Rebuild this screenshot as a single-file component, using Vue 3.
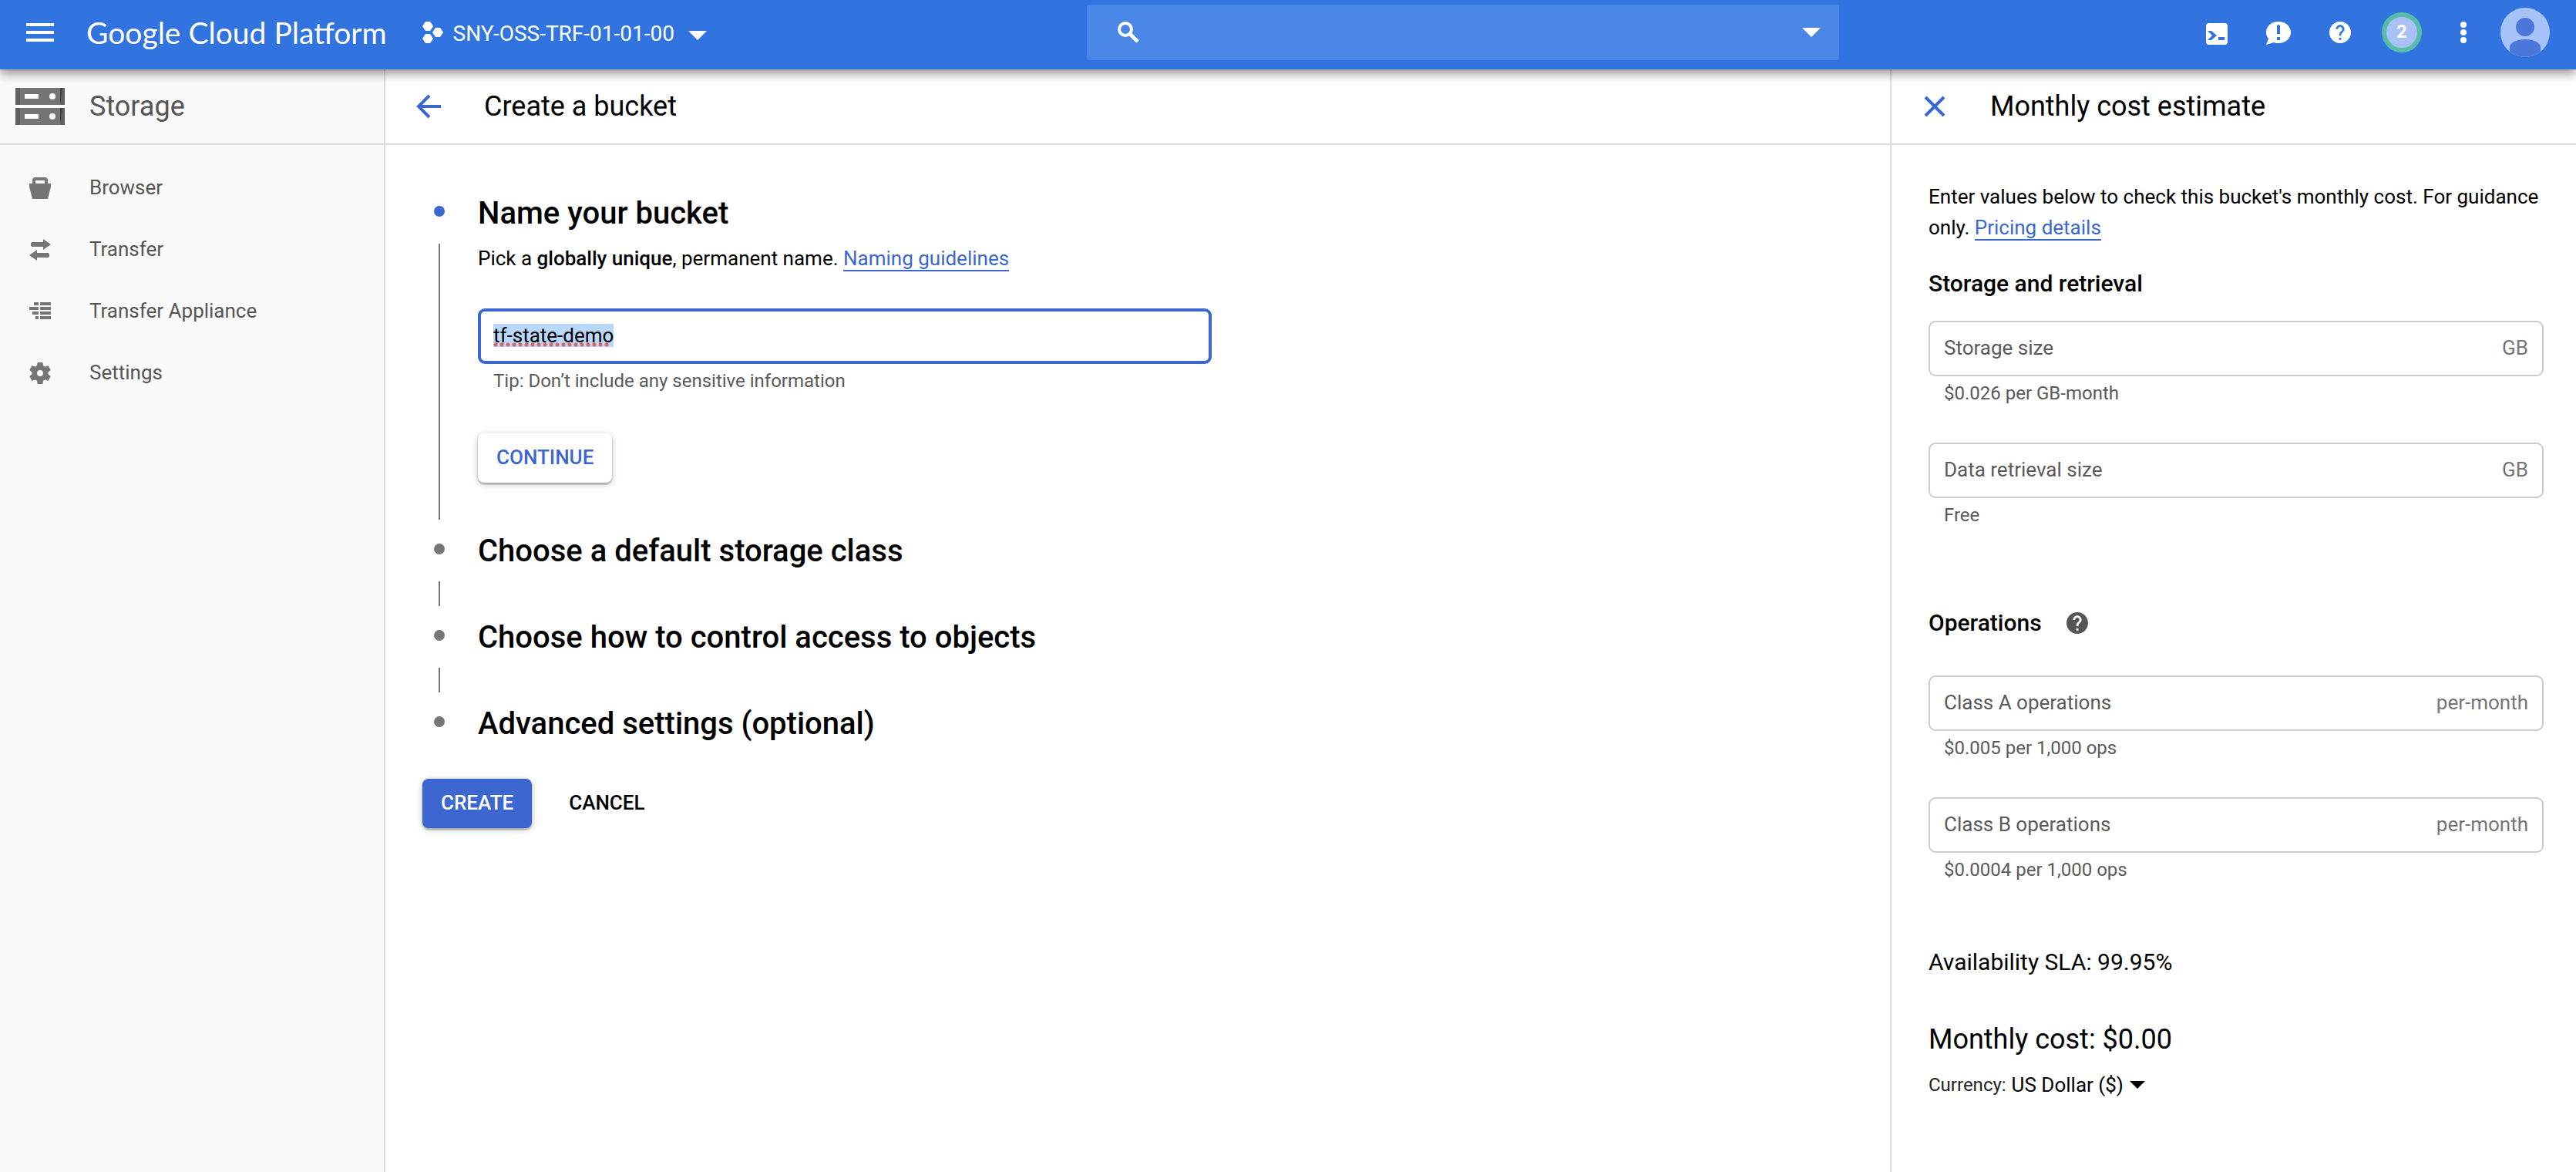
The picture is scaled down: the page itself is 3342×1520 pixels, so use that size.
<script setup>
import { onMounted, ref } from 'vue'

const bucketName = ref('tf-state-demo')
const nameInput = ref(null)
const currency = ref('USD')

const steps = [
  'Choose a default storage class',
  'Choose how to control access to objects',
  'Advanced settings (optional)'
]

const storageFields = ref([
  { id: 'storage-size', label: 'Storage size', unit: 'GB', hint: '$0.026 per GB-month', value: '' },
  { id: 'retrieval-size', label: 'Data retrieval size', unit: 'GB', hint: 'Free', value: '' }
])

const operationFields = ref([
  { id: 'class-a', label: 'Class A operations', unit: 'per-month', hint: '$0.005 per 1,000 ops', value: '' },
  { id: 'class-b', label: 'Class B operations', unit: 'per-month', hint: '$0.0004 per 1,000 ops', value: '' }
])

onMounted(() => {
  nameInput.value.focus()
  nameInput.value.select()
})
</script>

<template>
  <div class="app">
    <header class="topbar">
      <div class="topbar-left">
        <button class="icon-btn menu" aria-label="Navigation menu">
          <svg width="36" height="24" viewBox="0 0 36 24"><path fill="currentColor" d="M0 0h36v4H0zM0 10h36v4H0zM0 20h36v4H0z" /></svg>
        </button>
        <a class="brand" href="#">Google Cloud Platform</a>
        <button class="project">
          <svg width="28" height="28" viewBox="0 0 28 28">
            <path fill="currentColor" d="M4 0h6l4 6-4 6H4L0 6zM4 16h6l4 6-4 6H4l-4-6zM17 8h6l4 6-4 6h-6l-4-6z" />
          </svg>
          <span>SNY-OSS-TRF-01-01-00</span>
          <svg class="caret" width="24" height="12" viewBox="0 0 24 12"><path fill="currentColor" d="M0 0h24L12 12z" /></svg>
        </button>
      </div>

      <div class="search">
        <svg width="28" height="28" viewBox="0 0 28 28" fill="none" stroke="currentColor">
          <circle cx="10" cy="10" r="8" stroke-width="4" />
          <path d="M16 16l10 10" stroke-width="5" />
        </svg>
        <input type="search" aria-label="Search products and resources" />
        <button class="icon-btn" aria-label="Search options">
          <svg width="24" height="12" viewBox="0 0 24 12"><path fill="currentColor" d="M0 0h24L12 12z" /></svg>
        </button>
      </div>

      <div class="topbar-right">
        <button class="icon-btn tool" aria-label="Activate Cloud Shell">
          <svg class="shell" width="28" height="28" viewBox="0 0 28 28">
            <rect width="28" height="28" rx="4" fill="currentColor" />
            <path fill="#3174e0" d="M2 10h5l7 6-7 6H2l6-6zM16 18h8v4h-8z" />
          </svg>
        </button>
        <button class="icon-btn tool" aria-label="Send feedback">
          <svg class="feedback" width="32" height="30" viewBox="0 0 32 30">
            <path fill="currentColor" d="M16 0c9 0 16 6 16 14s-7 14-16 14c-2 0-4 0-6-1L0 30l3-8C1 20 0 17 0 14 0 6 7 0 16 0z" />
            <path fill="#3174e0" d="M14 6a2 2 0 0 1 4 0v10h-4zM14 20h4v4h-4z" />
          </svg>
        </button>
        <button class="icon-btn tool" aria-label="Help">
          <svg width="28" height="28" viewBox="2 2 20 20">
            <path fill="currentColor" d="M12 2C6.480 2 2 6.480 2 12s4.480 10 10 10 10-4.480 10-10S17.520 2 12 2zm1 17h-2v-2h2v2zm2.070-7.750l-.9.920C13.450 12.900 13 13.500 13 15h-2v-.5c0-1.100.450-2.100 1.170-2.830l1.240-1.260c.370-.360.590-.860.590-1.410 0-1.100-.9-2-2-2s-2 .9-2 2H8c0-2.210 1.790-4 4-4s4 1.790 4 4c0 .880-.360 1.680-.930 2.250z" />
          </svg>
        </button>
        <button class="icon-btn tool" aria-label="Notifications"><span class="count">2</span></button>
        <button class="icon-btn tool" aria-label="More options">
          <svg width="8" height="28" viewBox="0 0 8 28" fill="currentColor">
            <circle cx="4" cy="4" r="4" /><circle cx="4" cy="14" r="4" /><circle cx="4" cy="24" r="4" />
          </svg>
        </button>
        <button class="icon-btn tool" aria-label="Account">
          <svg width="64" height="64" viewBox="0 0 64 64">
            <defs><clipPath id="avatar-clip"><circle cx="32" cy="32" r="32" /></clipPath></defs>
            <circle cx="32" cy="32" r="32" fill="#a6c3fa" />
            <g fill="#4b77da" clip-path="url(#avatar-clip)">
              <circle cx="32" cy="25" r="12" />
              <path d="M12 64V51c0-6 10-10 20-10s20 4 20 10v13z" />
            </g>
          </svg>
        </button>
      </div>
    </header>

    <div class="body">
      <aside class="sidebar">
        <div class="product">
          <svg width="64" height="48" viewBox="0 0 64 48">
            <g v-for="y in [0, 26]" :key="y" :transform="`translate(0 ${y})`">
              <path fill="#757575" d="M0 0h64v22H0z" />
              <path fill="#616161" d="M0 0h6v22H0zM58 0h6v22h-6z" />
              <path fill="#424242" d="M58 0h3l-3 20z" />
              <path fill="#fff" d="M12 8h18v6H12z" />
              <circle cx="48" cy="11" r="4" fill="#fff" />
            </g>
            <path fill="#fff" d="M0 22h64v4H0z" />
          </svg>
          <h2>Storage</h2>
        </div>
        <nav>
          <a href="#">
            <svg width="28" height="28" viewBox="0 0 28 28" fill="currentColor">
              <path fill-rule="evenodd" d="M0 8h4V4q0-4 4-4h12q4 0 4 4v4h4v4l-4 16H4L0 12zM8 4v4h12V4z" />
            </svg>
            <span>Browser</span>
          </a>
          <a href="#">
            <svg width="28" height="28" viewBox="0 0 28 28" fill="currentColor">
              <path d="M4 4h14V0l10 7-10 7v-4H4q-2 0-2-2V6q0-2 2-2zM24 18H10v-4L0 21l10 7v-4h14q2 0 2-2v-2q0-2-2-2z" />
            </svg>
            <span>Transfer</span>
          </a>
          <a href="#">
            <svg width="28" height="28" viewBox="0 0 28 28" fill="currentColor">
              <path d="M6 2h6v4H6zM14 2h14v4H14zM0 8h12v4H0zM14 8h14v4H14zM4 14h8v4H4zM14 14h14v4H14zM8 20h4v4H8zM14 20h14v4H14z" />
            </svg>
            <span>Transfer Appliance</span>
          </a>
          <a href="#">
            <svg width="28" height="28" viewBox="2 2 20 20">
              <path fill="currentColor" d="M19.430 12.980c.04-.32.07-.64.07-.98s-.03-.66-.07-.98l2.110-1.650c.19-.15.24-.42.12-.64l-2-3.460c-.12-.22-.39-.3-.61-.22l-2.490 1c-.52-.4-1.080-.73-1.690-.98l-.38-2.650C14.460 2.180 14.250 2 14 2h-4c-.25 0-.46.18-.49.42l-.38 2.650c-.61.25-1.170.59-1.690.98l-2.490-1c-.23-.09-.49 0-.61.22l-2 3.460c-.13.22-.07.49.12.64l2.110 1.650c-.04.32-.07.65-.07.98s.03.66.07.98l-2.110 1.650c-.19.15-.24.42-.12.64l2 3.460c.12.22.39.3.61.22l2.490-1c.52.4 1.080.73 1.690.98l.38 2.650c.03.24.24.42.49.42h4c.25 0 .46-.18.49-.42l.38-2.650c.61-.25 1.170-.59 1.690-.98l2.490 1c.23.09.49 0 .61-.22l2-3.460c.12-.22.07-.49-.12-.64l-2.110-1.650z" />
              <circle cx="12" cy="12" r="2.800" fill="#fafafa" />
            </svg>
            <span>Settings</span>
          </a>
        </nav>
      </aside>

      <main class="main">
        <div class="title-strip">
          <button class="icon-btn" aria-label="Back">
            <svg width="32" height="32" viewBox="0 0 32 32" fill="none" stroke="currentColor" stroke-width="4">
              <path d="M17 2L3 16l14 14M3 16h29" />
            </svg>
          </button>
          <h1>Create a bucket</h1>
        </div>

        <form class="form" @submit.prevent>
          <section class="step active">
            <div class="rail"><span class="dot"></span><span class="line"></span></div>
            <div class="step-content">
              <h2>Name your bucket</h2>
              <p>Pick a <b>globally unique</b>, permanent name. <a class="link" href="#">Naming guidelines</a></p>
              <div class="name-field">
                <input ref="nameInput" v-model="bucketName" type="text" spellcheck="false" aria-label="Name" aria-describedby="name-tip" />
                <span class="spell" aria-hidden="true"></span>
              </div>
              <div id="name-tip" class="hint">Tip: Don’t include any sensitive information</div>
              <button class="btn raised" type="button">CONTINUE</button>
            </div>
          </section>
          <section v-for="step in steps" :key="step" class="step">
            <div class="rail"><span class="dot"></span><span class="line"></span></div>
            <div class="step-content"><h2>{{ step }}</h2></div>
          </section>
          <div class="actions">
            <button class="btn primary" type="submit">CREATE</button>
            <button class="btn" type="button">CANCEL</button>
          </div>
        </form>
      </main>

      <aside class="estimate">
        <div class="title-strip">
          <button class="icon-btn" aria-label="Close">
            <svg width="28" height="28" viewBox="0 0 28 28" fill="none" stroke="currentColor" stroke-width="4">
              <path d="M2 2l24 24M26 2L2 26" />
            </svg>
          </button>
          <h1>Monthly cost estimate</h1>
        </div>
        <div class="estimate-body">
          <p>
            Enter values below to check this bucket's monthly cost. For guidance only.
            <a class="link" href="#">Pricing details</a>
          </p>

          <h3>Storage and retrieval</h3>
          <div class="fields storage-fields">
            <div v-for="field in storageFields" :key="field.id">
              <div class="box">
                <label :for="field.id">{{ field.label }}</label>
                <input :id="field.id" v-model="field.value" type="text" />
                <span class="unit">{{ field.unit }}</span>
              </div>
              <div class="hint">{{ field.hint }}</div>
            </div>
          </div>

          <h3 class="operations">
            Operations
            <svg width="28" height="28" viewBox="2 2 20 20">
              <path fill="#555" d="M12 2C6.480 2 2 6.480 2 12s4.480 10 10 10 10-4.480 10-10S17.520 2 12 2zm1 17h-2v-2h2v2zm2.070-7.750l-.9.920C13.450 12.900 13 13.500 13 15h-2v-.5c0-1.100.450-2.100 1.170-2.830l1.240-1.260c.370-.360.590-.860.590-1.410 0-1.100-.9-2-2-2s-2 .9-2 2H8c0-2.210 1.790-4 4-4s4 1.790 4 4c0 .880-.360 1.680-.930 2.250z" />
            </svg>
          </h3>
          <div class="fields operation-fields">
            <div v-for="field in operationFields" :key="field.id">
              <div class="box">
                <label :for="field.id">{{ field.label }}</label>
                <input :id="field.id" v-model="field.value" type="text" />
                <span class="unit">{{ field.unit }}</span>
              </div>
              <div class="hint">{{ field.hint }}</div>
            </div>
          </div>

          <div class="sla">Availability SLA: 99.95%</div>
          <div class="total">Monthly cost: $0.00</div>
          <div class="currency">
            <label for="currency">Currency:</label>
            <select id="currency" v-model="currency"><option value="USD">US Dollar ($)</option></select>
            <svg width="20" height="10" viewBox="0 0 20 10"><path d="M0 0h20L10 10z" /></svg>
          </div>
        </div>
      </aside>
    </div>
  </div>
</template>

<style>
body {
  background: #fff;
}
</style>

<style scoped>
.app {
  display: flex;
  flex-direction: column;
  min-height: 100vh;
  font-family: Roboto, 'Liberation Sans', sans-serif;
  font-size: 26px;
  line-height: 40px;
  color: #000;
}
.app * {
  box-sizing: border-box;
}
h1, h2, h3, p {
  margin: 0;
}
svg {
  display: block;
  flex: none;
}
button, input, select {
  margin: 0;
  padding: 0;
  border: 0;
  background: none;
  font: inherit;
  color: inherit;
  outline: none;
}
button {
  cursor: pointer;
}
.icon-btn {
  display: flex;
  align-items: center;
  justify-content: center;
}

/* Top bar */
.topbar {
  position: relative;
  z-index: 1;
  display: flex;
  align-items: center;
  height: 90px;
  padding-bottom: 6px;
  background: #3174e0;
  color: #fff;
  box-shadow: 0 6px 12px rgba(0, 0, 0, 0.4);
}
.topbar-left {
  display: flex;
  align-items: center;
  width: 1410px;
  padding-left: 34px;
}
.brand {
  margin-left: 42px;
  font-family: Lato, Roboto, sans-serif;
  font-size: 39px;
  color: #fff;
  text-decoration: none;
}
.project {
  display: flex;
  align-items: center;
  margin-left: 46px;
  font-size: 28px;
}
.project span {
  margin: 4px 18px 0 12px;
}
.caret {
  margin-top: 8px;
}
.search {
  display: flex;
  flex: 1;
  align-items: center;
  gap: 24px;
  height: 72px;
  padding: 0 24px 0 40px;
  border-radius: 4px;
  background: #4a86e5;
}
.search input {
  flex: 1;
  min-width: 0;
  align-self: stretch;
}
.topbar-right {
  display: flex;
  justify-content: flex-end;
  width: 956px;
  padding-right: 26px;
}
.tool {
  width: 80px;
  height: 64px;
}
.shell {
  margin-top: 4px;
}
.feedback {
  margin-top: 2px;
}
.count {
  width: 52px;
  height: 52px;
  border: 6px solid #57bca8;
  border-radius: 50%;
  background: #a8c1f6;
  font-size: 24px;
  font-weight: 700;
  line-height: 38px;
  text-align: center;
}

/* Columns */
.body {
  display: flex;
  flex: 1;
}
.sidebar {
  flex: none;
  width: 500px;
  border-right: 2px solid #ddd;
  background: #fafafa;
  color: #555;
}
.main {
  flex: 1;
  min-width: 0;
}
.estimate {
  flex: none;
  width: 890px;
  border-left: 2px solid #ddd;
}

/* Sidebar */
.product, .title-strip {
  display: flex;
  align-items: center;
  height: 98px;
  border-bottom: 2px solid #ddd;
}
.product {
  gap: 32px;
  padding-left: 20px;
}
.product h2, .title-strip h1 {
  font-size: 36px;
  font-weight: 400;
}
nav {
  padding-top: 16px;
}
nav a {
  display: flex;
  align-items: center;
  gap: 50px;
  height: 80px;
  padding-left: 38px;
  color: inherit;
  text-decoration: none;
}
nav span {
  padding-bottom: 2px;
}
nav svg {
  color: #757575;
}

/* Main column */
.title-strip {
  gap: 56px;
  padding-left: 40px;
}
.title-strip .icon-btn {
  color: #3c67d0;
}
.form {
  padding: 64px 48px;
}
.step {
  display: flex;
  gap: 28px;
  min-height: 112px;
}
.step:nth-of-type(4) {
  min-height: 50px;
}
.step:nth-of-type(4) .line {
  display: none;
}
.rail {
  display: flex;
  flex: none;
  flex-direction: column;
  align-items: center;
  gap: 35px;
  width: 44px;
  padding: 15px 0 16px;
}
.dot {
  width: 14px;
  height: 14px;
  border-radius: 50%;
  background: #757575;
}
.step:nth-of-type(4) .rail {
  padding-bottom: 0;
}
.active .dot {
  background: #3c67d0;
}
.line {
  flex: 1;
  width: 2px;
  background: #757575;
}
.step-content {
  flex: 1;
}
.active .step-content {
  padding-bottom: 64px;
}
.step h2 {
  font-size: 40px;
  font-weight: 500;
  line-height: 50px;
}
.step p {
  margin-top: 13px;
}
b {
  font-weight: 500;
}
.link {
  border-bottom: 2px solid #3c67d0;
  color: #3c67d0;
  text-decoration: none;
}
.name-field {
  position: relative;
  max-width: 952px;
  margin-top: 45px;
}
.name-field input {
  display: block;
  width: 100%;
  height: 72px;
  padding: 0 16px 2px;
  border: 4px solid #3c67d0;
  border-radius: 9px;
  line-height: 30px;
}
.name-field input::selection {
  background: #b9d6fb;
  color: #000;
}
.spell {
  position: absolute;
  left: 20px;
  bottom: 22px;
  width: 152px;
  height: 6px;
  background: radial-gradient(circle at 3px 3px, #e5605c 2px, transparent 3px) 0 0 / 8px 6px;
  pointer-events: none;
}
.hint {
  margin-top: 6px;
  padding-left: 20px;
  font-size: 24px;
  line-height: 32px;
  color: #5a5a5a;
}
.btn {
  height: 64px;
  padding: 0 24px 2px;
  border-radius: 8px;
  font-weight: 500;
}
.raised {
  margin-top: 52px;
  color: #3c67d0;
  box-shadow: 0 2px 2px rgba(0, 0, 0, 0.25), 0 2px 8px rgba(0, 0, 0, 0.25);
}
.primary {
  background: #3c67d0;
  color: #fff;
  box-shadow: 0 2px 2px rgba(0, 0, 0, 0.25), 0 2px 8px rgba(0, 0, 0, 0.25);
}
.actions {
  display: flex;
  gap: 24px;
  margin-top: 46px;
}

/* Cost estimate */
.estimate .title-strip {
  gap: 58px;
  padding-left: 42px;
}
.estimate-body {
  padding: 47px 42px 48px 48px;
}
h3 {
  margin-top: 33px;
  font-size: 30px;
  font-weight: 500;
}
.fields {
  display: flex;
  flex-direction: column;
  gap: 48px;
}
.storage-fields {
  margin-top: 28px;
}
.operation-fields {
  margin-top: 48px;
}
.box {
  display: flex;
  align-items: center;
  gap: 16px;
  height: 72px;
  padding: 0 18px 2px;
  border: 2px solid #ccc;
  border-radius: 9px;
  color: #5a5a5a;
}
.box input {
  flex: 1;
  min-width: 0;
  align-self: stretch;
}
.unit {
  color: #757575;
}
.operations {
  display: flex;
  align-items: center;
  gap: 32px;
  margin-top: 104px;
}
.sla {
  margin-top: 84px;
  font-size: 30px;
}
.total {
  margin-top: 56px;
  font-size: 36px;
  line-height: 48px;
}
.currency {
  display: flex;
  align-items: center;
  gap: 7px;
  margin-top: 15px;
}
.currency label {
  font-size: 24px;
  color: #222;
}
.currency select {
  appearance: none;
}
</style>
